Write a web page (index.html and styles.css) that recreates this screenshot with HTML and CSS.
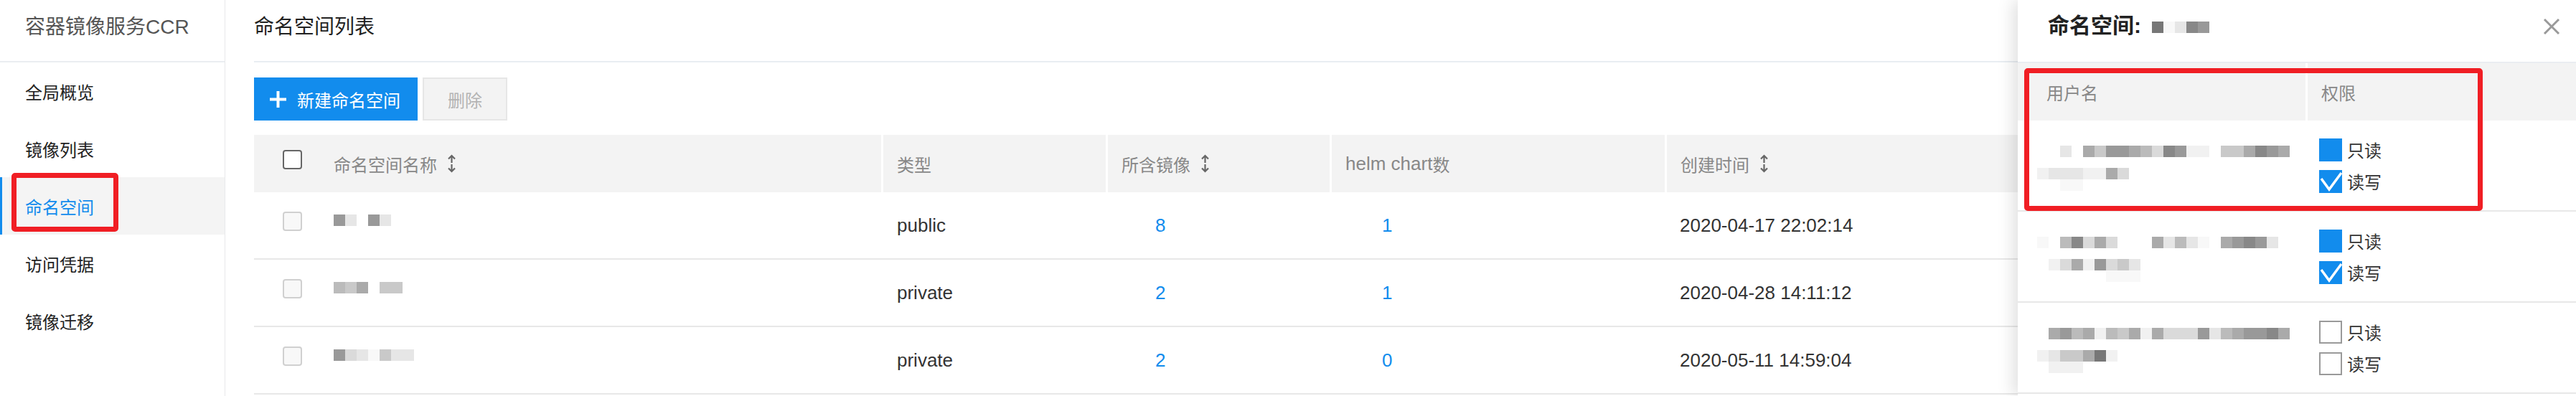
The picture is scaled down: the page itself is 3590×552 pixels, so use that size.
FILE: index.html
```html
<!DOCTYPE html>
<html lang="zh-CN">
<head>
<meta charset="utf-8">
<title>命名空间列表</title>
<link rel="stylesheet" href="styles.css">
</head>
<body>
<div class="app">
  <aside class="sidebar">
    <div class="side-head">容器镜像服务CCR</div>
    <nav class="menu">
      <div class="menu-item">全局概览</div>
      <div class="menu-item">镜像列表</div>
      <div class="menu-item active">命名空间</div>
      <div class="menu-item">访问凭据</div>
      <div class="menu-item">镜像迁移</div>
    </nav>
    <div class="mark mark-side"></div>
  </aside>

  <main class="main">
    <div class="page-head">命名空间列表</div>
    <div class="toolbar">
      <button class="btn btn-primary">
        <svg class="plus" viewBox="0 0 25 25" width="25" height="25"><path d="M12.5 1v23M1 12.5h23" stroke="#fff" stroke-width="4" fill="none"/></svg>
        <span>新建命名空间</span>
      </button>
      <button class="btn btn-disabled">删除</button>
    </div>

    <div class="table">
      <div class="tr th">
        <div class="cell c-check"><span class="cb cb-head"></span></div>
        <div class="cell c-name">命名空间名称<svg class="sort" viewBox="0 0 13 26" width="13" height="26"><path d="M6.5 2v10M2 6.5L6.5 2 11 6.5M6.5 14v10M2 19.5l4.5 4.5 4.5-4.5" stroke="#666" stroke-width="2.2" fill="none"/></svg></div>
        <div class="cell c-div">类型</div>
        <div class="cell c-div">所含镜像<svg class="sort" viewBox="0 0 13 26" width="13" height="26"><path d="M6.5 2v10M2 6.5L6.5 2 11 6.5M6.5 14v10M2 19.5l4.5 4.5 4.5-4.5" stroke="#666" stroke-width="2.2" fill="none"/></svg></div>
        <div class="cell c-div"><span class="lat">helm chart</span>数</div>
        <div class="cell c-div">创建时间<svg class="sort" viewBox="0 0 13 26" width="13" height="26"><path d="M6.5 2v10M2 6.5L6.5 2 11 6.5M6.5 14v10M2 19.5l4.5 4.5 4.5-4.5" stroke="#666" stroke-width="2.2" fill="none"/></svg></div>
      </div>

      <div class="tr td">
        <div class="cell c-check"><span class="cb"></span></div>
        <div class="cell c-name"><div class="mosaic mname"><span class="k9"></span><span class="ke"></span><span class="w"></span><span class="k9"></span><span class="ke"></span></div></div>
        <div class="cell c-type lat">public</div>
        <div class="cell c-img lat"><a class="link">8</a></div>
        <div class="cell c-helm lat"><a class="link">1</a></div>
        <div class="cell c-time lat">2020-04-17 22:02:14</div>
      </div>

      <div class="tr td">
        <div class="cell c-check"><span class="cb"></span></div>
        <div class="cell c-name"><div class="mosaic mname"><span class="kb"></span><span class="kc"></span><span class="ka"></span><span class="w"></span><span class="kc"></span><span class="kc"></span></div></div>
        <div class="cell c-type lat">private</div>
        <div class="cell c-img lat"><a class="link">2</a></div>
        <div class="cell c-helm lat"><a class="link">1</a></div>
        <div class="cell c-time lat">2020-04-28 14:11:12</div>
      </div>

      <div class="tr td">
        <div class="cell c-check"><span class="cb"></span></div>
        <div class="cell c-name"><div class="mosaic mname"><span class="k9"></span><span class="kd"></span><span class="ke"></span><span class="kg"></span><span class="kc"></span><span class="ke"></span><span class="ke"></span></div></div>
        <div class="cell c-type lat">private</div>
        <div class="cell c-img lat"><a class="link">2</a></div>
        <div class="cell c-helm lat"><a class="link">0</a></div>
        <div class="cell c-time lat">2020-05-11 14:59:04</div>
      </div>
    </div>
  </main>

  <section class="drawer">
    <div class="dr-head">
      <div class="dr-title">命名空间:<div class="mosaic mtitle"><span class="k7"></span><span class="kg"></span><span class="ke"></span><span class="k8"></span><span class="k9"></span></div></div>
      <svg class="close" viewBox="0 0 24 24" width="24" height="24"><path d="M2 2l20 20M22 2L2 22" stroke="#999" stroke-width="3" fill="none"/></svg>
    </div>

    <div class="dt-row dt-head">
      <div class="dcell d-user">用户名</div>
      <div class="dcell d-perm-h">权限</div>
    </div>

    <div class="dt-row dt-body">
      <div class="dcell d-name">
        <div class="mosaic"><span class="w"></span><span class="w"></span><span class="ke"></span><span class="w"></span><span class="ka"></span><span class="kc"></span><span class="k9"></span><span class="k9"></span><span class="ka"></span><span class="kb"></span><span class="kd"></span><span class="k8"></span><span class="k9"></span><span class="kf"></span><span class="kf"></span><span class="w"></span><span class="kc"></span><span class="kc"></span><span class="ka"></span><span class="k8"></span><span class="k9"></span><span class="ka"></span></div>
        <div class="mosaic gap"><span class="kf"></span><span class="ke"></span><span class="ke"></span><span class="ke"></span><span class="kf"></span><span class="kf"></span><span class="ka"></span><span class="kd"></span></div>
        <div class="mosaic"><span class="w"></span><span class="w"></span><span class="kg"></span><span class="kg"></span></div>
      </div>
      <div class="dcell perm">
        <div class="perm-item"><span class="dcb on"></span>只读</div>
        <div class="perm-item"><span class="dcb on"><svg viewBox="0 0 32 32" width="32" height="32"><path d="M3 12l11 15L31 4" stroke="#fff" stroke-width="3.5" fill="none"/></svg></span>读写</div>
      </div>
    </div>

    <div class="dt-row dt-body">
      <div class="dcell d-name">
        <div class="mosaic"><span class="kg"></span><span class="w"></span><span class="kb"></span><span class="k8"></span><span class="kd"></span><span class="ka"></span><span class="kd"></span><span class="w"></span><span class="w"></span><span class="w"></span><span class="ka"></span><span class="ke"></span><span class="kb"></span><span class="ke"></span><span class="kg"></span><span class="w"></span><span class="ka"></span><span class="k9"></span><span class="k8"></span><span class="k9"></span><span class="ke"></span></div>
        <div class="mosaic gap"><span class="w"></span><span class="kf"></span><span class="kd"></span><span class="ka"></span><span class="kf"></span><span class="k9"></span><span class="kd"></span><span class="kc"></span><span class="ke"></span></div>
        <div class="mosaic"><span class="w"></span><span class="w"></span><span class="w"></span><span class="w"></span><span class="w"></span><span class="w"></span><span class="kg"></span><span class="kg"></span><span class="kg"></span></div>
      </div>
      <div class="dcell perm">
        <div class="perm-item"><span class="dcb on"></span>只读</div>
        <div class="perm-item"><span class="dcb on"><svg viewBox="0 0 32 32" width="32" height="32"><path d="M3 12l11 15L31 4" stroke="#fff" stroke-width="3.5" fill="none"/></svg></span>读写</div>
      </div>
    </div>

    <div class="dt-row dt-body">
      <div class="dcell d-name">
        <div class="mosaic"><span class="w"></span><span class="ka"></span><span class="k9"></span><span class="kb"></span><span class="ka"></span><span class="kf"></span><span class="kb"></span><span class="kc"></span><span class="ka"></span><span class="kf"></span><span class="ka"></span><span class="kd"></span><span class="kd"></span><span class="kd"></span><span class="k9"></span><span class="ke"></span><span class="kb"></span><span class="ka"></span><span class="k9"></span><span class="k9"></span><span class="k8"></span><span class="ka"></span></div>
        <div class="mosaic gap"><span class="kf"></span><span class="ke"></span><span class="kc"></span><span class="kc"></span><span class="ka"></span><span class="k7"></span><span class="kf"></span></div>
        <div class="mosaic"><span class="w"></span><span class="kf"></span><span class="kf"></span><span class="kf"></span></div>
      </div>
      <div class="dcell perm">
        <div class="perm-item"><span class="dcb off"></span>只读</div>
        <div class="perm-item"><span class="dcb off"></span>读写</div>
      </div>
    </div>

    <div class="mark mark-drawer"></div>
  </section>
</div>
</body>
</html>
```

FILE: styles.css
```css
* { box-sizing: border-box; }

html, body {
  margin: 0;
  padding: 0;
  background: #fff;
}

body {
  font-family: "Liberation Sans", "Noto Sans CJK SC", sans-serif;
  color: #333;
}

.app {
  position: relative;
  display: flex;
  width: 3590px;
  height: 552px;
  overflow: hidden;
}

/* ---------- sidebar ---------- */
.sidebar {
  position: relative;
  flex: none;
  width: 314px;
  border-right: 1px solid #e8e9eb;
}

.side-head {
  height: 87px;
  border-bottom: 2px solid #eaedf1;
  padding: 22px 0 0 35px;
  font-size: 28px;
  line-height: 32px;
  color: #555;
  white-space: nowrap;
}

.menu-item {
  height: 80px;
  display: flex;
  align-items: center;
  padding-left: 35px;
  font-size: 24px;
  color: #222;
}

.menu-item.active {
  background: #f4f4f4;
  color: #128ced;
  box-shadow: inset 3px 0 0 #128ced;
}

.mark {
  position: absolute;
  border: 7px solid #f01e24;
  border-radius: 5px;
  pointer-events: none;
}

.mark-side {
  left: 16px;
  top: 241px;
  width: 149px;
  height: 82px;
}

/* ---------- main ---------- */
.main {
  flex: 1;
  min-width: 0;
  padding: 0 40px;
}

.page-head {
  height: 87px;
  border-bottom: 2px solid #e9edf2;
  padding-top: 22px;
  font-size: 28px;
  line-height: 32px;
  color: #222;
}

.toolbar {
  display: flex;
  gap: 7px;
  margin-top: 21px;
  height: 60px;
}

.btn {
  height: 60px;
  border: none;
  font-family: inherit;
  font-size: 24px;
  display: flex;
  align-items: center;
  padding: 0;
}

.btn-primary {
  background: #128ced;
  color: #fff;
  padding: 0 24px 0 21px;
  gap: 14px;
}

.btn-disabled {
  background: #f3f3f3;
  border: 2px solid #e6e6e6;
  color: #b3b3b3;
  padding: 0 33px;
}

.table {
  margin-top: 20px;
}

.tr {
  display: grid;
  grid-template-columns: 86px 788px 313px 312px 467px 1fr;
}

.th {
  height: 80px;
  background: #f3f3f3;
  color: #888;
  font-size: 24px;
}

.td {
  height: 94px;
  border-bottom: 2px solid #e8e8e8;
  font-size: 24px;
  color: #333;
}

.cell {
  display: flex;
  align-items: center;
  padding-left: 22px;
  white-space: nowrap;
}

.c-check { padding-left: 40px; }
.c-name { padding-left: 25px; }
.c-div {
  border-left: 3px solid #fff;
  padding-left: 19px;
}
.c-type { padding-left: 22px; }
.c-img { padding-left: 69px; }
.c-helm { padding-left: 73px; }
.c-time { padding-left: 21px; }

.lat { font-size: 26px; }
.th .lat { color: #888; }

.sort {
  margin-left: 14px;
  flex: none;
}

.link {
  color: #128ced;
  text-decoration: none;
}

.cb {
  display: block;
  width: 27px;
  height: 27px;
  border: 2px solid #d0d0d0;
  border-radius: 4px;
  background: #f8f8f8;
  margin-bottom: 12px;
}

.cb-head {
  border-color: #666;
  background: #fff;
}

/* ---------- mosaic (blurred text) ---------- */
.mosaic {
  display: flex;
  height: 16px;
}

.mosaic span {
  flex: none;
  width: 16px;
  height: 16px;
}

.mname { margin-bottom: 14px; }

.w  { background: transparent; }
.k7 { background: #777; }
.k8 { background: #888; }
.k9 { background: #999; }
.ka { background: #aaa; }
.kb { background: #bbb; }
.kc { background: #c9c9c9; }
.kd { background: #dadada; }
.ke { background: #e6e6e6; }
.kf { background: #f1f1f1; }
.kg { background: #f8f8f8; }

/* ---------- drawer ---------- */
.drawer {
  position: absolute;
  top: 0;
  right: 0;
  width: 778px;
  height: 552px;
  background: #fff;
  box-shadow: -6px 0 22px rgba(0, 0, 0, 0.13);
}

.dr-head {
  height: 88px;
  border-bottom: 2px solid #eaedf1;
  display: flex;
  align-items: flex-start;
  justify-content: space-between;
  padding: 18px 22px 0 42px;
}

.dr-title {
  display: flex;
  align-items: baseline;
  font-size: 30px;
  line-height: 36px;
  font-weight: 600;
  color: #222;
}

.mtitle { margin-left: 15px; }

.close {
  margin-top: 7px;
}

.dt-row {
  display: grid;
  grid-template-columns: 401px 1fr;
}

.dt-head {
  height: 80px;
  background: #f3f3f3;
  color: #888;
  font-size: 24px;
}

.dcell {
  display: flex;
  align-items: center;
}

.d-user { padding-left: 40px; }
.d-perm-h {
  border-left: 3px solid #fff;
  padding-left: 19px;
}

.dt-body {
  height: 127px;
  border-bottom: 2px solid #e8e8e8;
}

.d-name {
  flex-direction: column;
  align-items: flex-start;
  padding: 35px 0 0 27px;
}

.d-name .gap { margin-top: 15px; }

.perm {
  flex-direction: column;
  align-items: flex-start;
  justify-content: center;
  gap: 12px;
  padding-left: 19px;
}

.perm-item {
  display: flex;
  align-items: center;
  gap: 7px;
  height: 32px;
  font-size: 24px;
  color: #333;
}

.dcb {
  display: block;
  width: 32px;
  height: 32px;
}

.dcb svg { display: block; }

.dcb.on { background: #128ced; }
.dcb.off {
  background: #fff;
  border: 2px solid #9a9a9a;
}

.mark-drawer {
  left: 9px;
  top: 95px;
  width: 639px;
  height: 199px;
}
```
